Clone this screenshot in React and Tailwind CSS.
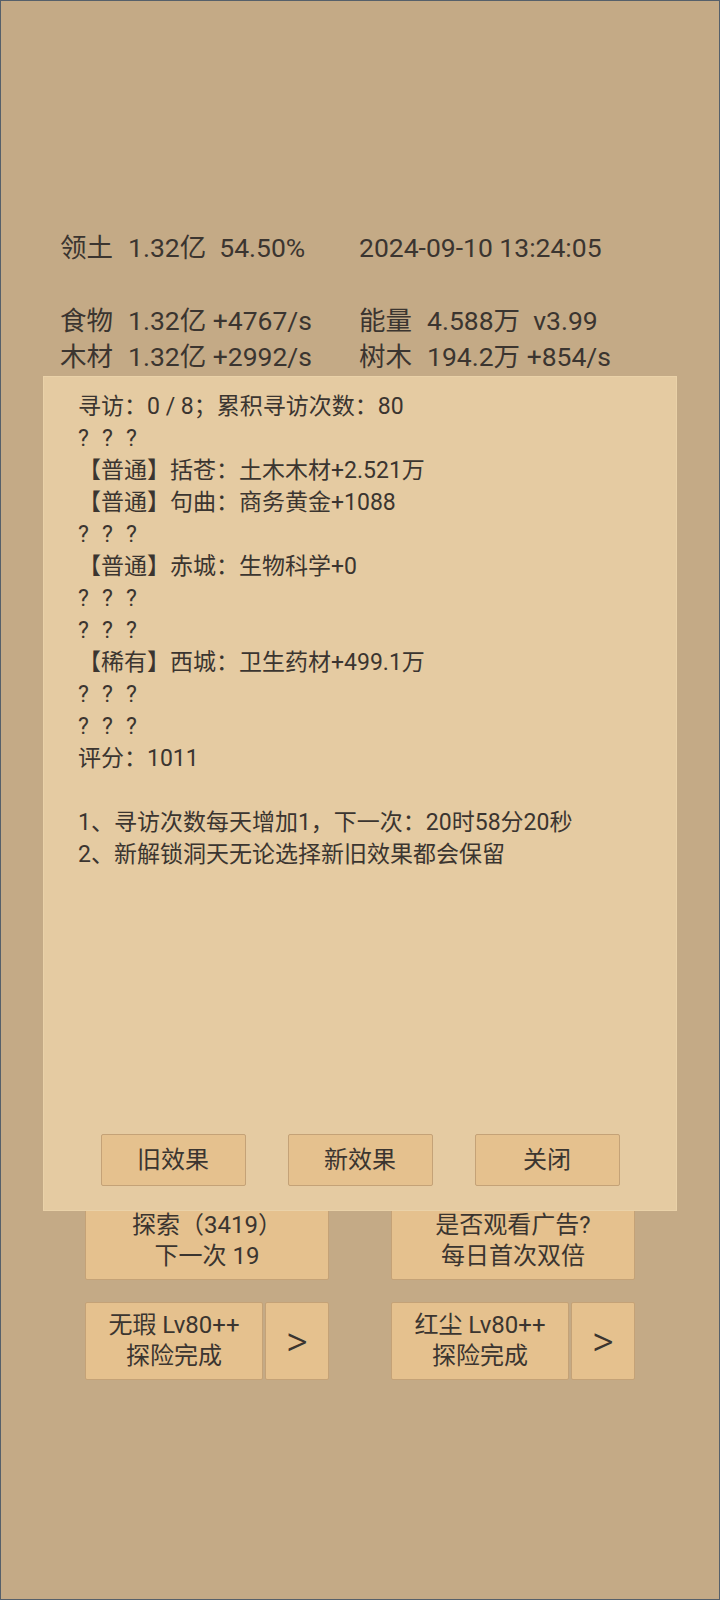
const FONT = { fontFamily: 'Roboto, "Noto Sans CJK SC", sans-serif' };

const LINES = [
  '【普通】括苍：土木木材+2.521万',
  '【普通】句曲：商务黄金+1088',
];

function Q() {
  return (
    <div className="flex h-[32px] items-center">
      <span className="w-[24px]">?</span>
      <span className="w-[24px]">?</span>
      <span className="w-[24px]">?</span>
    </div>
  );
}

function Line({ children }) {
  return <div className="h-[32px] whitespace-pre leading-[32px]">{children}</div>;
}

function StatRow({ a, av, b, bv, className }) {
  return (
    <div className={`flex h-[36px] items-center pl-[59px] ${className || ''}`}>
      <div className="flex w-[299px]">
        <span className="w-[68px]">{a}</span>
        <span className="whitespace-pre">{av}</span>
      </div>
      <div className="flex">
        {b && <span className="w-[68px]">{b}</span>}
        <span className="whitespace-pre">{bv}</span>
      </div>
    </div>
  );
}

function Btn({ children, className }) {
  return (
    <div
      className={`flex flex-col items-center justify-center rounded-[2px] border border-[#c4a277] bg-[#e5c18e] leading-[31px] text-[#3b3530] ${className || ''}`}
    >
      {children}
    </div>
  );
}

export default function App() {
  return (
    <div
      className="relative h-[1600px] w-[720px] overflow-hidden border border-[#56606a] bg-[#c4aa86] text-[#3b3530]"
      style={FONT}
    >
      <div className="pt-[229px] text-[26.5px]">
        <StatRow a="领土" av="1.32亿  54.50%" bv="2024-09-10 13:24:05" />
        <StatRow a="食物" av="1.32亿 +4767/s" b="能量" bv="4.588万  v3.99" className="mt-[37px]" />
        <StatRow a="木材" av="1.32亿 +2992/s" b="树木" bv="194.2万 +854/s" />
      </div>

      <div className="mt-[827px] flex justify-center gap-[62px] text-[24px]">
        <Btn className="h-[78px] w-[244px]">
          <span>探索（3419）</span>
          <span>下一次 19</span>
        </Btn>
        <Btn className="h-[78px] w-[244px]">
          <span>是否观看广告?</span>
          <span>每日首次双倍</span>
        </Btn>
      </div>

      <div className="mt-[22px] flex justify-center gap-[62px] text-[24px]">
        <div className="flex gap-[2px]">
          <Btn className="h-[78px] w-[178px]">
            <span>无瑕 Lv80++</span>
            <span>探险完成</span>
          </Btn>
          <Btn className="h-[78px] w-[64px] text-[42px] font-light">&gt;</Btn>
        </div>
        <div className="flex gap-[2px]">
          <Btn className="h-[78px] w-[178px]">
            <span>红尘 Lv80++</span>
            <span>探险完成</span>
          </Btn>
          <Btn className="h-[78px] w-[64px] text-[42px] font-light">&gt;</Btn>
        </div>
      </div>

      <div className="absolute left-[42px] top-[375px] flex h-[835px] w-[634px] flex-col border border-[#ead2a9] bg-[#e5cba2] pb-[24px] pl-[34px] pt-[14px] text-[23px]">
        <Line>寻访：0 / 8；累积寻访次数：80</Line>
        <Q />
        {LINES.map((t) => (
          <Line key={t}>{t}</Line>
        ))}
        <Q />
        <Line>【普通】赤城：生物科学+0</Line>
        <Q />
        <Q />
        <Line>【稀有】西城：卫生药材+499.1万</Line>
        <Q />
        <Q />
        <Line>评分：1011</Line>
        <Line> </Line>
        <Line>1、寻访次数每天增加1，下一次：20时58分20秒</Line>
        <Line>2、新解锁洞天无论选择新旧效果都会保留</Line>

        <div className="mt-auto -ml-[34px] flex justify-center gap-[42px] text-[24px]">
          <Btn className="h-[52px] w-[145px]">旧效果</Btn>
          <Btn className="h-[52px] w-[145px]">新效果</Btn>
          <Btn className="h-[52px] w-[145px]">关闭</Btn>
        </div>
      </div>
    </div>
  );
}
